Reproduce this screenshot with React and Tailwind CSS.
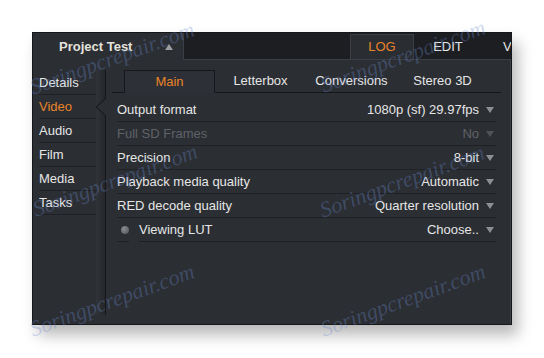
import React from 'react';

const rows = [
  { label: 'Output format', value: '1080p (sf) 29.97fps' },
  { label: 'Full SD Frames', value: 'No', disabled: true },
  { label: 'Precision', value: '8-bit' },
  { label: 'Playback media quality', value: 'Automatic' },
  { label: 'RED decode quality', value: 'Quarter resolution' },
];

const sideItems = ['Details', 'Video', 'Audio', 'Film', 'Media', 'Tasks'];
const tabs = ['Main', 'Letterbox', 'Conversions', 'Stereo 3D'];

const Caret = ({ dim }) => (
  <svg width="8" height="6" viewBox="0 0 8 6" className="shrink-0">
    <polygon points="0,0 8,0 4,6" fill={dim ? '#4f5257' : '#8c8f94'} />
  </svg>
);

const Watermark = ({ x, y }) => (
  <div className="absolute w-0 h-0 pointer-events-none" style={{ left: x, top: y }}>
    <span className="absolute -translate-x-1/2 -translate-y-1/2 -rotate-[20deg] whitespace-nowrap italic text-[22px] text-[rgba(110,140,210,0.32)] font-['Liberation_Serif',serif]">
      Soringpcrepair.com
    </span>
  </div>
);

export default function App() {
  return (
    <div className="w-[544px] h-[358px] bg-white relative overflow-hidden pt-[32px] pl-[32px] font-['Liberation_Sans',Arial,sans-serif] text-[13px]">
      {/* Window */}
      <div className="w-[480px] h-[293px] bg-[#2b2e33] flex flex-col border border-[#15171a] shadow-[6px_10px_14px_rgba(0,0,0,0.28)] overflow-hidden">
        {/* Top bar */}
        <div className="h-[27px] flex shrink-0">
          <div className="w-[150px] shrink-0 flex items-center pl-[26px]">
            <span className="font-bold text-[#e4e2dc]">Project Test</span>
            <svg width="8" height="6" viewBox="0 0 8 6" className="ml-[33px]">
              <polygon points="0,6 8,6 4,0" fill="#9a9ca0" />
            </svg>
          </div>
          <div className="flex-1 min-w-0 bg-[#1c1e21] border-l border-b border-[#3b3e44] flex items-end pl-[166px] overflow-hidden">
            <div className="w-[64px] shrink-0 h-[25px] bg-[#2a2d31] border border-b-0 border-[#3a3d42] flex items-center justify-center text-[#e9842a]">
              LOG
            </div>
            <div className="w-[68px] shrink-0 h-[25px] flex items-center justify-center text-[#e6e6e6]">EDIT</div>
            <div className="shrink-0 h-[25px] flex items-center pl-[21px] text-[#e6e6e6]">VIEW</div>
          </div>
        </div>

        {/* Body */}
        <div className="flex-1 flex">
          {/* Sidebar */}
          <div className="w-[73px] flex shrink-0">
            <div className="w-[63px] pt-[11px]">
              {sideItems.map((s) => (
                <div
                  key={s}
                  className={`ml-[6px] h-[24px] flex items-center border-b border-[#1f2125] ${
                    s === 'Video' ? 'text-[#e9842a]' : 'text-[#e6e6e6]'
                  }`}
                >
                  {s}
                </div>
              ))}
            </div>
            <div className="relative w-[10px] mt-[10px] mb-[9px] bg-gradient-to-r from-[#303338] to-[#25272b] border-r border-[#15171a]">
              <svg width="11" height="18" viewBox="0 0 11 18" className="absolute -right-px top-[28px]">
                <polygon points="11,0 1,9 11,18" fill="#2b2e33" />
                <polyline points="11,0 1,9 11,18" fill="none" stroke="#15171a" strokeWidth="1" />
              </svg>
            </div>
          </div>

          {/* Content */}
          <div className="flex-1 pt-[10px] border-r border-[#3b3e44]">
            <div className="ml-[6px] mr-[9px] h-[23px] flex border-b border-[#15171a] pl-[12px]">
              {tabs.map((t, i) => (
                <div
                  key={t}
                  className={`w-[91px] flex items-center justify-center ${
                    i === 0
                      ? 'bg-[#2d3036] border border-[#15171a] border-b-[#2d3036] -mb-px text-[#e9842a]'
                      : 'text-[#e6e6e6]'
                  }`}
                >
                  {t}
                </div>
              ))}
            </div>

            <div className="ml-[11px] w-[379px] pt-[5px]">
              {rows.map((r) => (
                <div key={r.label} className="h-[24px] flex items-center border-b border-[#1f2125]">
                  <span className={r.disabled ? 'text-[#5f6268]' : 'text-[#e6e6e6]'}>{r.label}</span>
                  <span className={`ml-auto ${r.disabled ? 'text-[#5f6268]' : 'text-[#e6e6e6]'}`}>{r.value}</span>
                  <span className="ml-[7px] mr-[2px]">
                    <Caret dim={r.disabled} />
                  </span>
                </div>
              ))}
              <div className="h-[23px] flex items-center">
                <span className="ml-[4px] w-[8px] h-[8px] rounded-full bg-[radial-gradient(circle_at_35%_35%,#8a8c8f,#4e5054)]" />
                <span className="ml-[10px] text-[#e6e6e6]">Viewing LUT</span>
                <span className="ml-auto text-[#e6e6e6]">Choose..</span>
                <span className="ml-[7px] mr-[2px]">
                  <Caret />
                </span>
              </div>
              <div className="h-px flex">
                <span className="w-[12px] bg-[#1f2125]" />
                <span className="ml-[10px] flex-1 bg-[#1f2125]" />
              </div>
            </div>
          </div>
        </div>
      </div>

      <Watermark x={112} y={58} />
      <Watermark x={403} y={56} />
      <Watermark x={115} y={180} />
      <Watermark x={402} y={181} />
      <Watermark x={112} y={300} />
      <Watermark x={403} y={300} />
    </div>
  );
}
